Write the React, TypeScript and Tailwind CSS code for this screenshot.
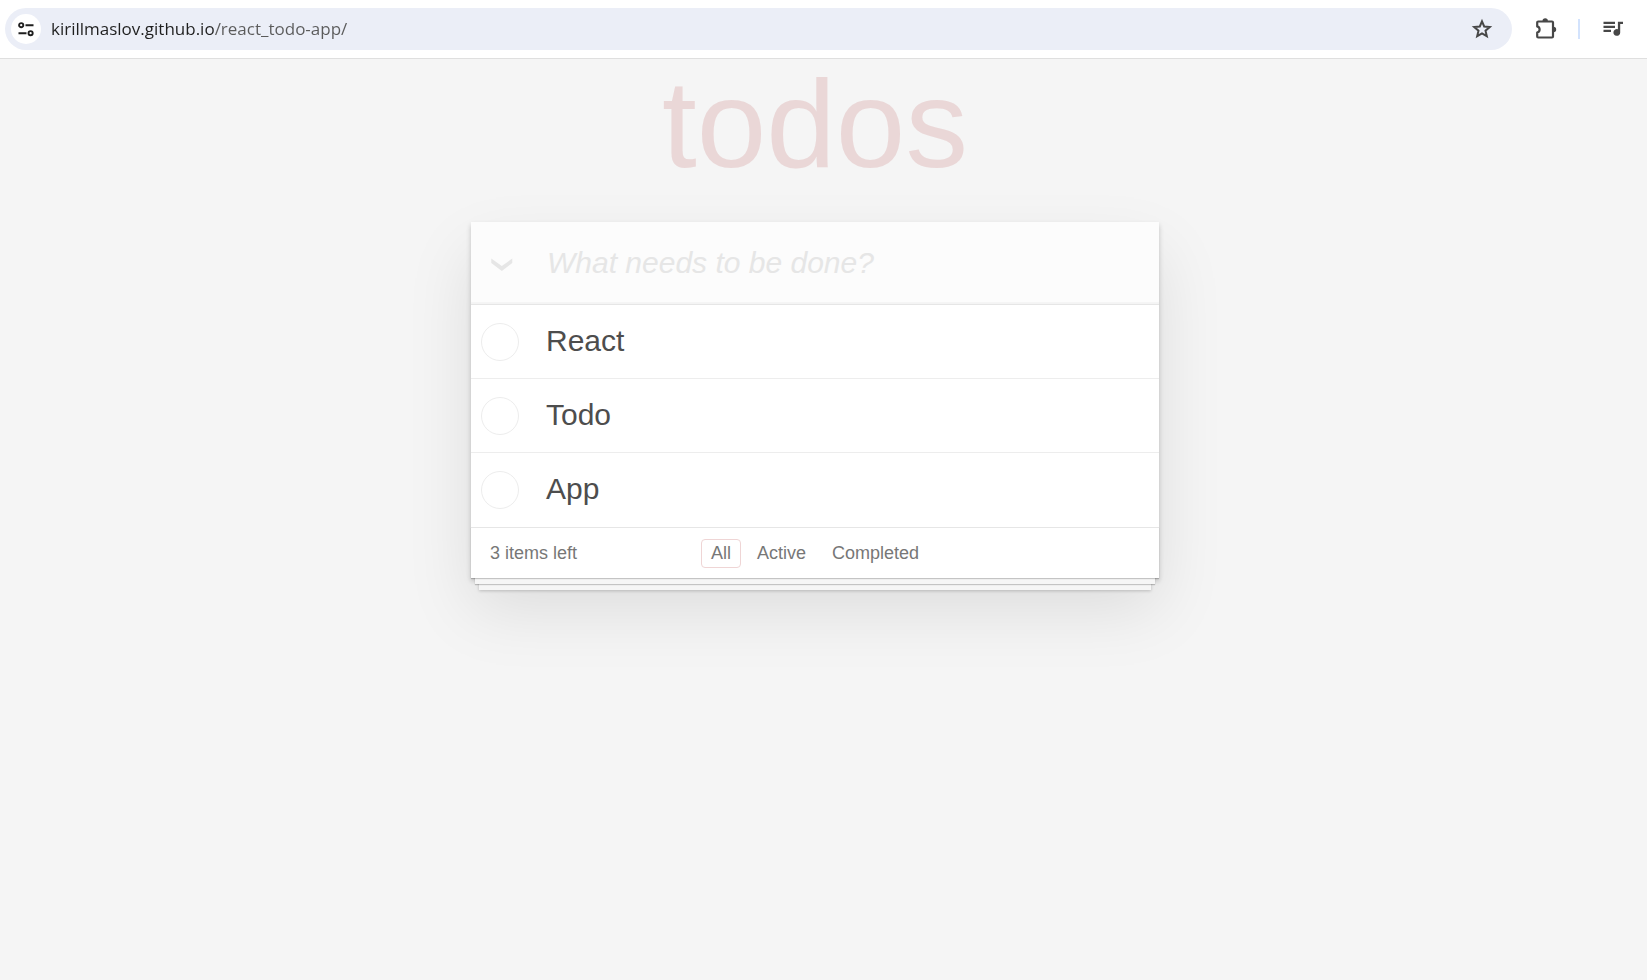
import React, { useState } from "react";

type Filter = "All" | "Active" | "Completed";

interface Todo {
  id: number;
  title: string;
  completed: boolean;
}

const initialTodos: Todo[] = [
  { id: 1, title: "React", completed: false },
  { id: 2, title: "Todo", completed: false },
  { id: 3, title: "App", completed: false },
];

const filters: Filter[] = ["All", "Active", "Completed"];

const TuneIcon = () => (
  <svg width="16" height="16" viewBox="0 0 16 16" fill="none" stroke="#1f1f1f" strokeWidth="1.9">
    <circle cx="3.2" cy="4.2" r="2.1" />
    <path d="M7.5 4.2H15.5M0.5 12.2H8.5" />
    <circle cx="12.6" cy="12.2" r="2.1" />
  </svg>
);

const StarIcon = () => (
  <svg width="24" height="24" viewBox="0 0 24 24">
    <path
      d="M12 4.3L14.200 9.500L19.800 10L15.500 13.700L16.800 19.200L12 16.300L7.200 19.200L8.500 13.700L4.200 10L9.800 9.500Z"
      fill="none"
      stroke="#474747"
      strokeWidth="2"
    />
  </svg>
);

const PuzzleIcon = () => (
  <svg width="22" height="22" viewBox="0 0 22 22">
    <path
      d="M3.2 3.5H17a1 1 0 0 1 1 1V18.500a1 1 0 0 1-1 1H3.200a1 1 0 0 1-1-1V14.600a3.200 3.200 0 0 0 0-6.200V4.500a1 1 0 0 1 1-1Z"
      fill="none"
      stroke="#474747"
      strokeWidth="2.2"
      strokeLinejoin="round"
    />
    <path d="M7.500 3a2.700 2.700 0 0 1 5.400 0ZM18.500 8.800a2.700 2.700 0 0 1 0 5.400Z" fill="#474747" />
  </svg>
);

const QueueIcon = () => (
  <svg width="24" height="24" viewBox="0 0 24 24" fill="#474747">
    <path d="M2.500 4.700H14V6.900H2.500ZM2.500 8.700H14V10.900H2.500ZM2.500 12.700H10V14.900H2.500Z" />
    <path d="M16.900 4.700H22V6.900H19.200V15.400A3.400 3.400 0 1 1 16.900 12.200Z" />
  </svg>
);

const ChevronIcon = () => (
  <svg width="22" height="14" viewBox="0 0 22 14" fill="#e6e6e6">
    <path d="M0.300 0.500 L10.800 8 L21.300 0.500 V5 L10.800 13 L0.300 5 Z" />
  </svg>
);

const BrowserBar = () => {
  return (
    <div className="flex h-[59px] items-center border-b border-[#dfdfdf] bg-white pl-[5px] pr-[22px]">
      <div className="flex h-[42px] flex-1 items-center rounded-full bg-[#ebeef7] pl-1.5 pr-[18px]">
        <button
          aria-label="Site information"
          className="flex size-[30px] items-center justify-center rounded-full bg-white"
        >
          <TuneIcon />
        </button>
        {/* the host is darker than the path */}
        <input
          type="text"
          aria-label="Address"
          defaultValue="kirillmaslov.github.io/react_todo-app/"
          className="ml-2.5 flex-1 bg-[linear-gradient(90deg,#1f1f1f_164px,#5a5a5a_164px)] bg-clip-text font-['Open_Sans',sans-serif] text-[17px] leading-6 text-transparent outline-none"
        />
        <button aria-label="Bookmark this page">
          <StarIcon />
        </button>
      </div>
      <button aria-label="Extensions" className="ml-[23px]">
        <PuzzleIcon />
      </button>
      <div className="ml-[21px] h-5 w-0.5 bg-[#d3e3fd]" />
      <button aria-label="Media controls" className="ml-[21px]">
        <QueueIcon />
      </button>
    </div>
  );
};

const App = () => {
  const [todos, setTodos] = useState<Todo[]>(initialTodos);
  const [filter, setFilter] = useState<Filter>("All");
  const [title, setTitle] = useState("");

  const activeCount = todos.filter((todo) => !todo.completed).length;

  const visibleTodos = todos.filter((todo) => {
    if (filter === "Active") return !todo.completed;
    if (filter === "Completed") return todo.completed;
    return true;
  });

  const toggleTodo = (id: number) => {
    setTodos(
      todos.map((todo) =>
        todo.id === id ? { ...todo, completed: !todo.completed } : todo
      )
    );
  };

  const toggleAll = () => {
    setTodos(todos.map((todo) => ({ ...todo, completed: activeCount > 0 })));
  };

  const addTodo = (event: React.FormEvent) => {
    event.preventDefault();
    if (!title.trim()) return;
    setTodos([...todos, { id: Date.now(), title: title.trim(), completed: false }]);
    setTitle("");
  };

  return (
    <div className="min-h-screen bg-[#f5f5f5] font-['Liberation_Sans',Arial,sans-serif] text-[#4d4d4d]">
      <BrowserBar />
      <main className="pr-[17px]">
        <div className="mx-auto max-w-[688px]">
          <h1 className="pb-[33px] text-center text-[125px] leading-[130px] text-[#ead7d7]">
            todos
          </h1>

          <section className="bg-white shadow-[0_3px_5px_rgba(0,0,0,0.2),0_31px_63px_rgba(0,0,0,0.1)]">
            <form
              onSubmit={addTodo}
              className="flex h-[82px] bg-[#fcfcfc] shadow-[inset_0_-2px_1px_rgba(0,0,0,0.03)]"
            >
              <button
                type="button"
                aria-label="Toggle all"
                onClick={toggleAll}
                className="flex w-[76px] items-center pl-5 pt-1"
              >
                <ChevronIcon />
              </button>
              <input
                type="text"
                aria-label="New todo"
                placeholder="What needs to be done?"
                value={title}
                onChange={(event) => setTitle(event.target.value)}
                className="flex-1 pb-0.5 text-[30px] outline-none placeholder:italic placeholder:text-[#e6e6e6]"
              />
            </form>

            <ul className="border-t border-[#e6e6e6]">
              {visibleTodos.map((todo) => (
                <li
                  key={todo.id}
                  className="flex h-[74px] items-center border-b border-[#ededed] pl-2.5 last:border-b-0"
                >
                  <input
                    id={`todo-${todo.id}`}
                    type="checkbox"
                    checked={todo.completed}
                    onChange={() => toggleTodo(todo.id)}
                    className="size-[38px] appearance-none rounded-full border border-[#ededed] checked:border-[#bddad5] checked:bg-[#bddad5]"
                  />
                  <label
                    htmlFor={`todo-${todo.id}`}
                    className={`flex-1 pb-0.5 pl-[27px] text-[30px] leading-9 ${
                      todo.completed ? "text-[#d9d9d9] line-through" : ""
                    }`}
                  >
                    {todo.title}
                  </label>
                </li>
              ))}
            </ul>

            {/* the stacked sheets under the card are layered shadows */}
            <footer className="grid h-[51px] grid-cols-[1fr_auto_1fr] items-center border-t border-[#e6e6e6] px-[19px] text-[18px] text-[#777777] shadow-[0_1px_1px_rgba(0,0,0,0.2),0_10px_0_-4px_#f6f6f6,0_11px_1px_-4px_rgba(0,0,0,0.2),0_20px_0_-8px_#f6f6f6,0_21px_3px_-8px_rgba(0,0,0,0.2)]">
              <span>{activeCount} items left</span>
              <nav className="flex gap-1.5">
                {filters.map((name) => (
                  <a
                    key={name}
                    href={`#/${name.toLowerCase()}`}
                    onClick={() => setFilter(name)}
                    className={`rounded-[4px] border px-[9px] leading-[27px] ${
                      filter === name ? "border-[#efd5d5]" : "border-transparent"
                    }`}
                  >
                    {name}
                  </a>
                ))}
              </nav>
            </footer>
          </section>
        </div>
      </main>
    </div>
  );
};

export default App;
